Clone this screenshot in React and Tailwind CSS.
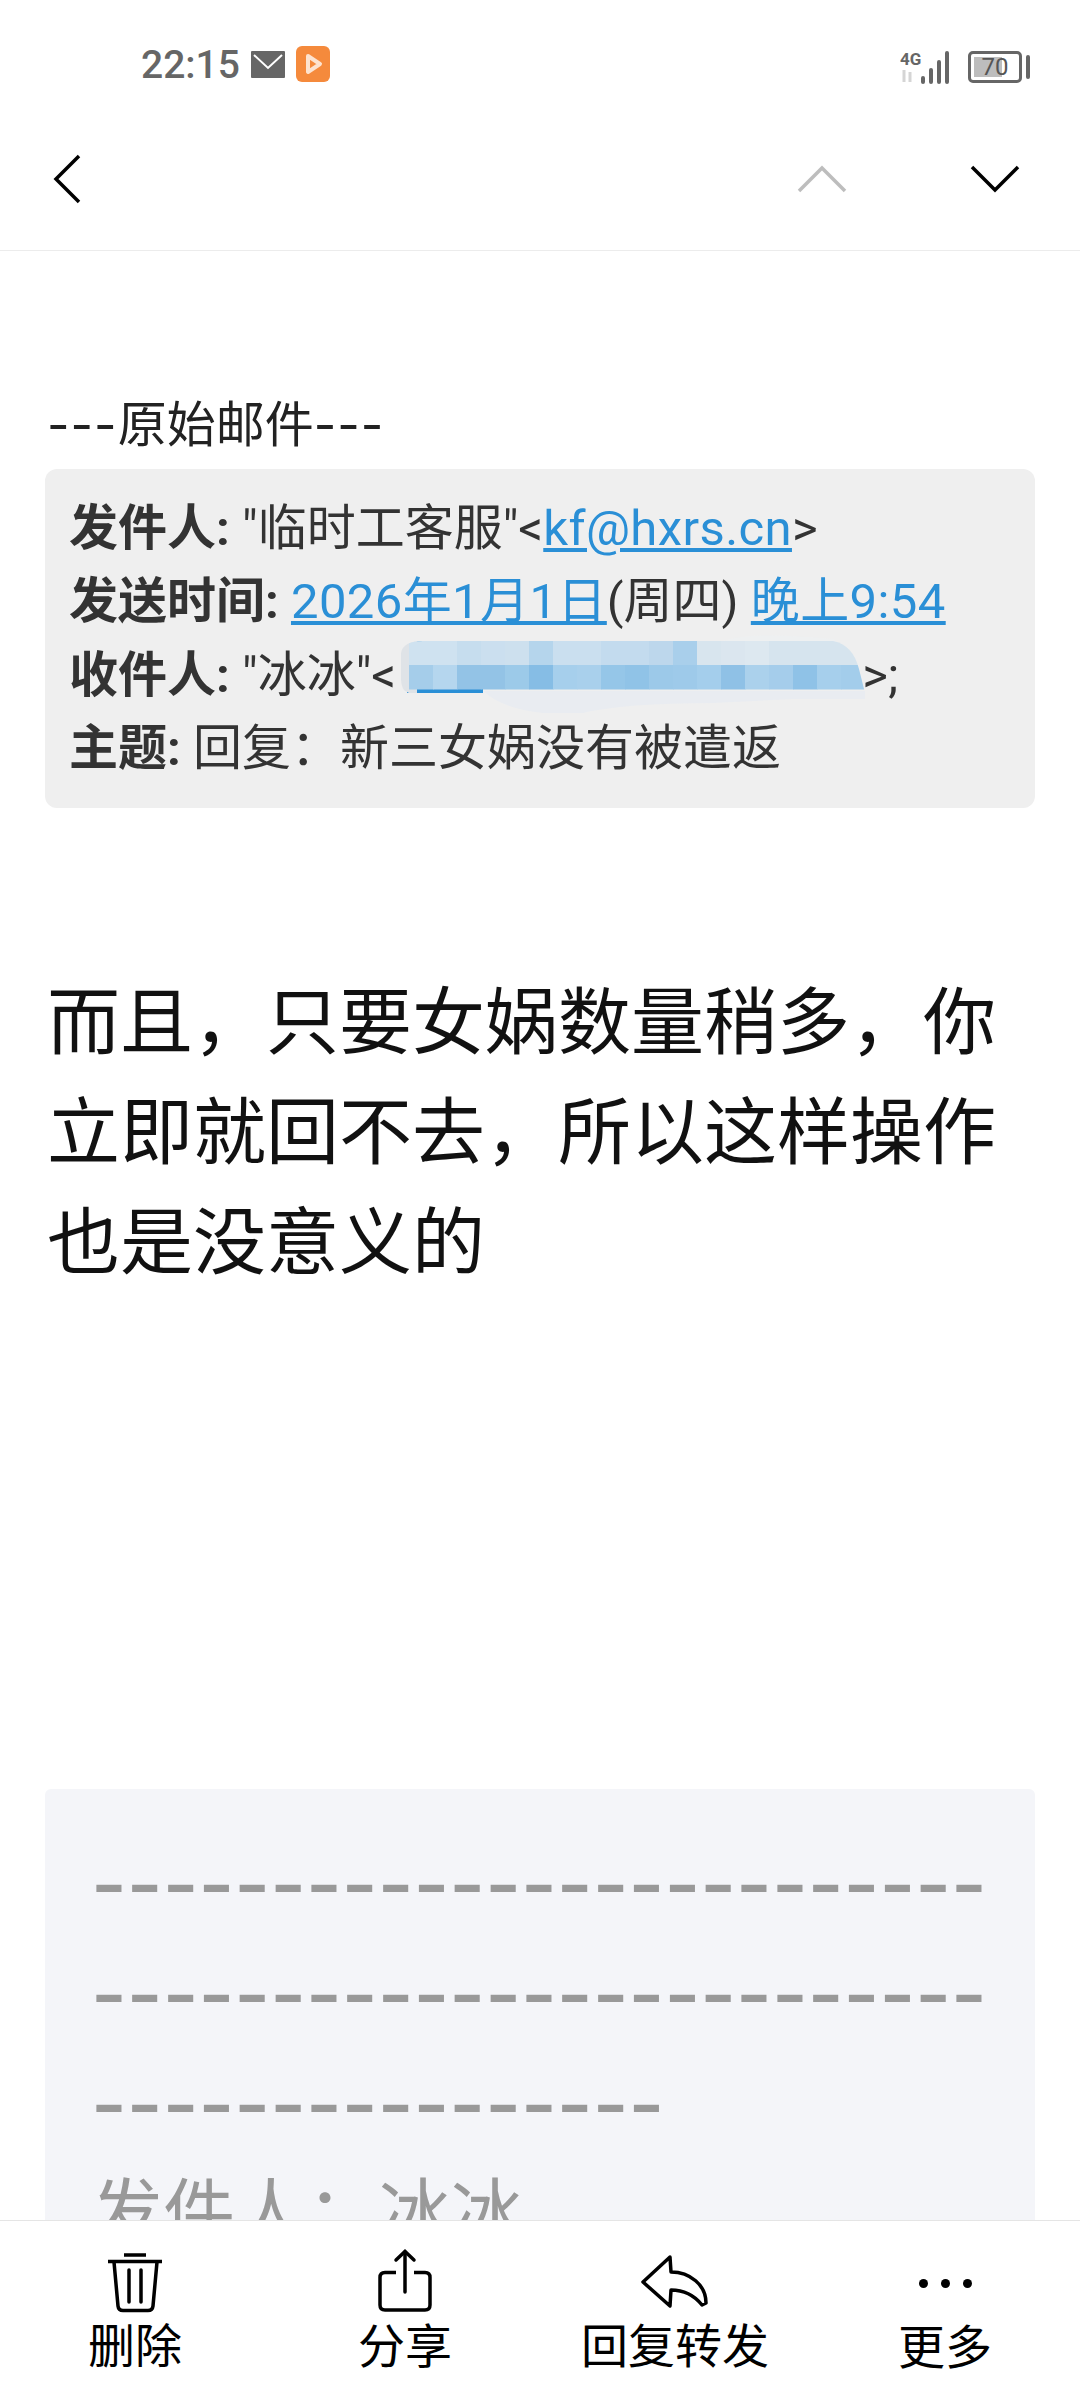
const cjk = "font-['Roboto','Noto_Sans_CJK_SC',sans-serif]"

const blurTop = ['#cfe2f0', '#cfe2f0', '#c6ddee', '#cbdfef', '#cde0ee', '#b5d5ec', '#cadfef', '#cadfef', '#c3dbee', '#c3dbee', '#bdd7ec', '#a9cfeb', '#d8e5ee', '#dbe6ef', '#dde8f0', '#d6e4ee', '#d6e4ee', '#d6e4ee', '#d6e4ee']
const blurBottom = ['#a5cdea', '#b5d6ee', '#93c3e6', '#93c3e6', '#9ccae9', '#86bde5', '#a6cfec', '#a9d0ec', '#95c6e8', '#90c3e7', '#9cc9e9', '#9ecaea', '#a4ceec', '#8fc1e6', '#abd1ec', '#a5cdeb', '#8fc2e7', '#a6cfec', '#a3cdeb']

function StatusBar() {
  return (
    <div className="flex h-[88px] items-end justify-between pl-[141px] pr-[50px] pb-[4px]">
      <div className="flex items-center">
        <span className="text-[39px] leading-[38px] font-medium text-[#666666] font-['Roboto',sans-serif] mt-[2px]">22:15</span>
        <svg width="34" height="27" viewBox="0 0 34 27" className="ml-[11px]">
          <rect width="34" height="27" rx="1" fill="#666666" />
          <path d="M3 4 L17 17 L31 4" fill="none" stroke="#ffffff" strokeWidth="2" />
        </svg>
        <svg width="34" height="36" viewBox="0 0 34 36" className="ml-[11px]">
          <rect width="34" height="36" rx="6" fill="#f58a3c" />
          <path d="M12 10 L24 18 L12 26 Z" fill="none" stroke="#fde3cf" strokeWidth="4" strokeLinejoin="round" />
        </svg>
      </div>
      <div className="flex items-center">
        <svg width="56" height="34" viewBox="0 0 56 34">
          <text x="0" y="15" fontSize="17" fontWeight="700" fontFamily="Roboto" fill="#666666">4G</text>
          <path d="M4 20 V32 M10 22 V32" stroke="#d5d5d5" strokeWidth="3" />
          <path d="M23 28 V32 M31 20 V32 M39 12 V32 M47 3 V32" stroke="#666666" strokeWidth="4" strokeLinecap="round" />
        </svg>
        <div className="relative ml-[12px] flex h-[32px] w-[54px] items-center justify-center rounded-[5px] border-[3px] border-[#666666]">
          <div className="absolute left-[3px] top-[3px] h-[20px] w-[28px] bg-[#bdbdbd]"></div>
          <span className="relative text-[24px] leading-[24px] text-[#555555] font-['Roboto',sans-serif]">70</span>
        </div>
        <div className="ml-[4px] h-[24px] w-[4px] rounded-full bg-[#666666]"></div>
      </div>
    </div>
  )
}

function NavBar() {
  return (
    <div className="flex h-[163px] items-center border-b border-[#ececec] pt-[20px]">
      <svg width="28" height="50" viewBox="0 0 28 50" className="ml-[53px]">
        <path d="M26 2 L3 25 L26 48" fill="none" stroke="#000000" strokeWidth="3.5" />
      </svg>
      <svg width="50" height="28" viewBox="0 0 50 28" className="ml-auto">
        <path d="M2 26 L25 3 L48 26" fill="none" stroke="#bdbdbd" strokeWidth="3.5" />
      </svg>
      <svg width="50" height="28" viewBox="0 0 50 28" className="ml-[123px] mr-[60px]">
        <path d="M2 2 L25 25 L48 2" fill="none" stroke="#000000" strokeWidth="3.5" />
      </svg>
    </div>
  )
}

// the scribbled-out address
function Redaction() {
  return (
    <svg width="480" height="86" viewBox="0 0 480 86" className="absolute left-[-3px] top-[-6px]">
      <defs>
        <clipPath id="smear">
          <path d="M8 20 Q10 8 30 8 H440 Q460 12 466 36 L472 60 H16 Q8 58 8 46 Z" />
        </clipPath>
      </defs>
      <path d="M14 55 H90 V60 H14 Z" fill="#2a8fd6" />
      <path d="M14 16 Q20 7 32 8 V16 Z" fill="#2a8fd6" />
      <path d="M90 58 H472 V66 H400 L320 70 Q230 70 190 80 H150 Q110 76 90 58 Z" fill="#e9ecf1" />
      <path d="M330 8 Q360 -2 440 6 L450 14 H330 Z" fill="#eef0f1" />
      <g clipPath="url(#smear)">
        <rect x="0" y="0" width="24" height="60" fill="#dfe3e7" />
        {blurTop.map((c, i) => <rect key={i} x={16 + i * 24} y="8" width="24.5" height="24.5" fill={c} />)}
        {blurBottom.map((c, i) => <rect key={i} x={16 + i * 24} y="32" width="24.5" height="24.5" fill={c} />)}
      </g>
    </svg>
  )
}

function QuotedHeader() {
  return (
    <div className="mx-[45px] mt-[9px] flex h-[339px] flex-col justify-center rounded-[12px] bg-[#efefef] pl-[24px] text-[49px] leading-[73.5px] text-[#333333]">
      <div className="whitespace-nowrap"><b>发件人:</b> "临时工客服"&lt;<a className="text-[#2a8fd6] underline tracking-[0.4px]">kf@hxrs.cn</a>&gt;</div>
      <div className="whitespace-nowrap"><b>发送时间:</b> <a className="text-[#2a8fd6] underline tracking-[0.4px]">2026年1月1日</a>(周四) <a className="text-[#2a8fd6] underline tracking-[0.4px]">晚上9:54</a></div>
      <div className="flex whitespace-nowrap">
        <span><b>收件人:</b> "冰冰"&lt;</span>
        <span className="relative w-[466px]">
          <Redaction />
        </span>
        <span>&gt;;</span>
      </div>
      <div className="whitespace-nowrap"><b>主题:</b> 回复：新三女娲没有被遣返</div>
    </div>
  )
}

function QuotedFooter() {
  return (
    <div className="mx-[45px] mt-[491px] h-[500px] rounded-t-[6px] bg-[#f4f5f9] pl-[46px] pt-[40px] text-[72px] leading-[110px] text-[#999999]">
      <div className="whitespace-nowrap font-['Inter',sans-serif] text-[77.5px] font-medium">-------------------------</div>
      <div className="whitespace-nowrap font-['Inter',sans-serif] text-[77.5px] font-medium">-------------------------</div>
      <div className="whitespace-nowrap font-['Inter',sans-serif] text-[77.5px] font-medium">----------------</div>
      <div>发件人：冰冰</div>
    </div>
  )
}

function BottomBar() {
  return (
    <div className="absolute bottom-0 left-0 grid h-[180px] w-full grid-cols-4 border-t border-[#e5e5e5] bg-white text-[47px] leading-[46px] text-black">
      <div className="flex flex-col items-center">
        <svg width="54" height="60" viewBox="0 0 54 60" className="mt-[32px]">
          <path d="M16 2 H38 M0 8.5 H54" stroke="#000" strokeWidth="3.5" fill="none" />
          <path d="M6 9 L10 53 Q10.5 57.5 15 57.5 H40 Q44.5 57.5 45 53 L49 9" stroke="#000" strokeWidth="3.5" fill="none" />
          <path d="M21 17 V49 M33 17 V49" stroke="#000" strokeWidth="3.5" fill="none" strokeLinecap="round" />
        </svg>
        <span className="mt-[11px]">删除</span>
      </div>
      <div className="flex flex-col items-center">
        <svg width="54" height="64" viewBox="0 0 54 64" className="mt-[28px]">
          <path d="M18 23.5 H7 Q2 23.5 2 28.5 V56 Q2 61 7 61 H47 Q52 61 52 56 V28.5 Q52 23.5 47 23.5 H36" stroke="#000" strokeWidth="3.5" fill="none" />
          <path d="M27 3 V43" stroke="#000" strokeWidth="3.5" fill="none" strokeLinecap="round" />
          <path d="M18 11 L27 2.5 L36 11" stroke="#000" strokeWidth="3.5" fill="none" strokeLinecap="round" />
        </svg>
        <span className="mt-[11px]">分享</span>
      </div>
      <div className="flex flex-col items-center">
        <svg width="70" height="58" viewBox="0 0 70 58" className="mt-[31px]">
          <path d="M30 5 L3 30 L30 54 L31 38 C44 38 54 43 62 53 L66 51 C66 33 50 20 31 20 Z" stroke="#000" strokeWidth="3.5" fill="none" strokeLinejoin="round" />
        </svg>
        <span className="mt-[14px]">回复转发</span>
      </div>
      <div className="flex flex-col items-center">
        <div className="mt-[58px] flex gap-[13px]">
          <span className="h-[9px] w-[9px] rounded-full bg-black"></span>
          <span className="h-[9px] w-[9px] rounded-full bg-black"></span>
          <span className="h-[9px] w-[9px] rounded-full bg-black"></span>
        </div>
        <span className="mt-[37px]">更多</span>
      </div>
    </div>
  )
}

export default function App() {
  return (
    <div className={`relative h-[2400px] w-[1080px] overflow-hidden bg-white ${cjk}`}>
      <StatusBar />
      <NavBar />
      <div className="ml-[47px] mt-[139px] h-[70px] text-[49px] leading-[70px] text-[#222222]">
        <span className="font-['Inter',sans-serif] tracking-[1px]">---</span>原始邮件<span className="font-['Inter',sans-serif] tracking-[1px]">---</span>
      </div>
      <QuotedHeader />
      <div className="mx-[47px] mt-[160px] text-[73px] leading-[110px] text-[#111111]">
        而且，只要女娲数量稍多，你立即就回不去，所以这样操作也是没意义的
      </div>
      <QuotedFooter />
      <BottomBar />
    </div>
  )
}
